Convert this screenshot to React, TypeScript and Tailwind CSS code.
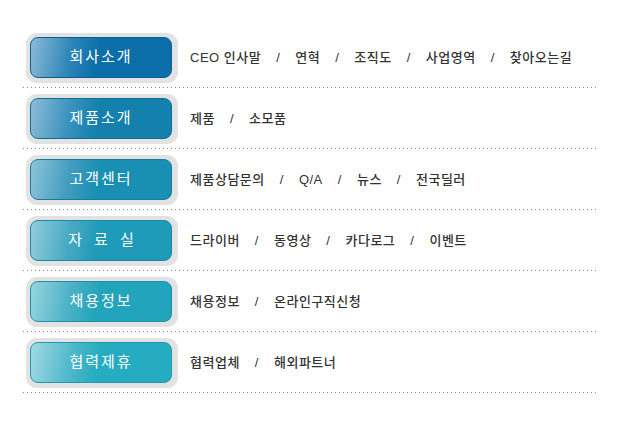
import React from "react";

const rows = [
  {
    title: "회사소개",
    bg: "bg-[linear-gradient(100deg,#8cbbd9_0%,#2f86b8_28%,#0b6ea8_48%,#0b6ea8_100%)]",
    border: "border-[#0a5f92]",
    links: ["CEO 인사말", "연혁", "조직도", "사업영역", "찾아오는길"],
  },
  {
    title: "제품소개",
    bg: "bg-[linear-gradient(100deg,#8dbcd8_0%,#3a92bc_28%,#1380ae_48%,#1380ae_100%)]",
    border: "border-[#106f99]",
    links: ["제품", "소모품"],
  },
  {
    title: "고객센터",
    bg: "bg-[linear-gradient(100deg,#8fc4d8_0%,#419dbf_28%,#198fb4_48%,#198fb4_100%)]",
    border: "border-[#157da0]",
    links: ["제품상담문의", "Q/A", "뉴스", "전국딜러"],
  },
  {
    title: "자료실",
    spaced: true,
    bg: "bg-[linear-gradient(100deg,#93cddb_0%,#48a9c4_28%,#1e9bb8_48%,#1e9bb8_100%)]",
    border: "border-[#1a89a3]",
    links: ["드라이버", "동영상", "카다로그", "이벤트"],
  },
  {
    title: "채용정보",
    bg: "bg-[linear-gradient(100deg,#97d5de_0%,#4db2c7_28%,#22a4bc_48%,#22a4bc_100%)]",
    border: "border-[#1d91a8]",
    links: ["채용정보", "온라인구직신청"],
  },
  {
    title: "협력제휴",
    bg: "bg-[linear-gradient(100deg,#a2dce3_0%,#52b9cb_28%,#26acc0_48%,#26acc0_100%)]",
    border: "border-[#2198ab]",
    links: ["협력업체", "해외파트너"],
  },
];

export default function App() {
  return (
    <div
      className="w-[627px] h-[431px] bg-white pt-[33px] pl-[23px]"
      style={{ fontFamily: '"Liberation Sans", "Noto Sans CJK KR", sans-serif' }}
    >
      <div className="w-[574px] flex flex-col">
        {rows.map((row) => (
          <div key={row.title} className="mb-[6px]">
            <div className="h-[54px] flex">
              {/* menu button */}
              <div className="ml-[3px] w-[152px] h-[50px] rounded-[11px] bg-[#e2e2e2] p-[4px]">
                <div
                  className={`h-[41px] w-[142px] rounded-[8px] border ${row.border} ${row.bg} flex items-center justify-center text-white text-[15px] tracking-[2px]`}
                >
                  {row.spaced ? (
                    <span className="flex gap-[12px] tracking-normal">
                      <span>자</span>
                      <span>료</span>
                      <span>실</span>
                    </span>
                  ) : (
                    row.title
                  )}
                </div>
              </div>
              <div className="flex items-center h-[50px] pl-[12px] text-[13px] font-medium tracking-[0.5px] text-[#333]">
                {row.links.map((l, i) => (
                  <React.Fragment key={l}>
                    {i > 0 && <span className="px-[15px] font-normal">/</span>}
                    <span>{l}</span>
                  </React.Fragment>
                ))}
              </div>
            </div>
            <div className="h-px bg-[linear-gradient(to_right,#8a8a8a_1px,transparent_1px)] bg-[length:4px_1px]" />
          </div>
        ))}
      </div>
    </div>
  );
}
